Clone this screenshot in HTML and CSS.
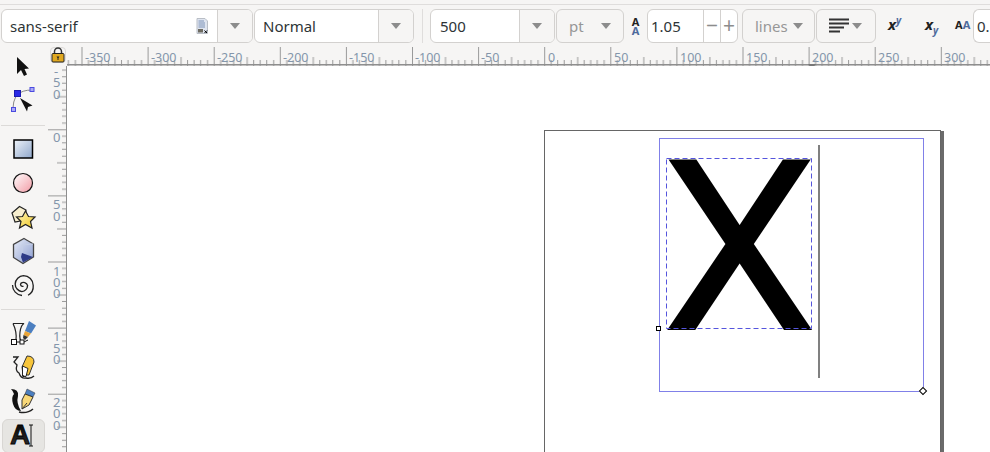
FILE: index.html
```html
<!DOCTYPE html>
<html lang="en">
<head>
<meta charset="utf-8">
<title>Inkscape text tool</title>
<link rel="stylesheet" href="styles.css">
</head>
<body>
<div class="app">
  <header class="toolbar">
    <div class="combo w-font">
      <span class="value">sans-serif</span>
      <svg class="doc-icon" viewBox="0 0 12 16" width="12" height="16">
        <path d="M1 0.500H9L11.500 3V15.500H1Z" fill="#dfe5f0" stroke="#b9bec6"/>
        <path d="M2.500 3H8M2.500 5H9M2.500 7H9M2.500 9H9" stroke="#7d93b8"/>
        <rect x="2" y="11" width="5" height="3.500" fill="#6d6a60"/>
        <path d="M8.500 12.500l2.500 2.500M11 12.500l-2.500 2.500" stroke="#000"/>
      </svg>
      <span class="drop"><i class="caret"></i></span>
    </div>
    <div class="combo w-style">
      <span class="value">Normal</span>
      <span class="drop"><i class="caret"></i></span>
    </div>
    <i class="vsep"></i>
    <div class="combo w-size">
      <span class="value v-size">500</span>
      <span class="drop d-size"><i class="caret"></i></span>
    </div>
    <div class="pick w-unit"><span>pt</span><i class="caret"></i></div>
    <div class="lh-icon"><b class="a-top">A</b><b class="a-bot">A</b></div>
    <div class="combo w-lh">
      <span class="value v-lh">1.05</span>
      <span class="step">&minus;</span>
      <span class="step">+</span>
    </div>
    <div class="pick w-lines"><span>lines</span><i class="caret"></i></div>
    <div class="pick w-align">
      <svg viewBox="0 0 21 17" width="21" height="17">
        <path d="M0 1.500H20M0 5.500H20M0 9.500H15M0 13.500H11" stroke="#333" stroke-width="2" fill="none"/>
      </svg>
      <i class="caret"></i>
    </div>
    <span class="mini sup">x<sup>y</sup></span>
    <span class="mini sub">x<sub>y</sub></span>
    <span class="mini aa">A<em>A</em></span>
    <div class="combo w-last"><span class="value v-last">0.5</span></div>
  </header>

  <div class="workspace">
    <nav class="tools">
      <div class="tool">
        <svg viewBox="0 0 28 28" width="28" height="28"><path d="M8 4V21L12 17L15 23L18 21.500L15.500 16L20 15.500Z" fill="#111"/></svg>
      </div>
      <div class="tool">
        <svg viewBox="0 0 28 28" width="28" height="28">
          <path d="M8 8Q13 3 23 3M7 9Q4 15 4 21" fill="none" stroke="#888"/>
          <rect x="5.500" y="3.500" width="6" height="6" fill="#2a2ae6" stroke="#1b1bb0"/>
          <rect x="21" y="0.500" width="4" height="4" fill="#aaaaf5" stroke="#4a4ae0"/>
          <rect x="2.500" y="20.500" width="4" height="4" fill="#aaaaf5" stroke="#4a4ae0"/>
          <path d="M11 11L23.500 18.500L19 20L18 24.500Z" fill="#111"/>
        </svg>
      </div>
      <hr class="tsep">
      <div class="tool">
        <svg viewBox="0 0 28 28" width="28" height="28">
          <defs><linearGradient id="gr" x1="0" y1="0" x2="1" y2="1"><stop offset="0" stop-color="#eef3f9"/><stop offset="1" stop-color="#8ea6ca"/></linearGradient></defs>
          <rect x="5" y="5" width="18.500" height="18" fill="url(#gr)" stroke="#000" stroke-width="1.500"/>
        </svg>
      </div>
      <div class="tool">
        <svg viewBox="0 0 28 28" width="28" height="28">
          <defs><linearGradient id="gc" x1="0" y1="0" x2="1" y2="1"><stop offset="0" stop-color="#fff"/><stop offset="1" stop-color="#f29aa4"/></linearGradient></defs>
          <circle cx="14" cy="14" r="9.500" fill="url(#gc)" stroke="#111" stroke-width="1.200"/>
        </svg>
      </div>
      <div class="tool">
        <svg viewBox="0 0 28 28" width="28" height="28">
          <defs><linearGradient id="gs" x1="0" y1="0" x2="1" y2="1"><stop offset="0" stop-color="#fff6c0"/><stop offset="1" stop-color="#f0c820"/></linearGradient></defs>
          <path d="M3 10L10.500 3.500L17 7L16 17L6 19Z" fill="#f7efcf" stroke="#222" stroke-width="1.200"/>
          <path d="M16.500 8L19.500 13.500L26 14L21.500 18.500L23 25L16.500 21.500L10.500 25L12 18.500L7.500 14L13.500 13.500Z" fill="url(#gs)" stroke="#222" stroke-width="1.200"/>
        </svg>
      </div>
      <div class="tool">
        <svg viewBox="0 0 28 28" width="28" height="28">
          <defs><linearGradient id="gb" x1="0" y1="0" x2="1" y2="1"><stop offset="0" stop-color="#e6ebf7"/><stop offset="1" stop-color="#8c9dcf"/></linearGradient></defs>
          <path d="M15 1.500L24.500 7V20L14 26.500L4.500 20.500V7.500Z" fill="url(#gb)" stroke="#444" stroke-width="1.300"/>
          <path d="M13 16L24 20L14 25.500L12 20Z" fill="#2e3a86"/>
          <path d="M13 16V8L24 7" fill="none" stroke="#c5cfe6"/>
        </svg>
      </div>
      <div class="tool">
        <svg viewBox="0 0 28 28" width="28" height="28">
          <path d="M14.500 15A1.800 1.800 0 0 1 12 12.500A4 4 0 0 1 18.500 14.500A6 6 0 0 1 13 20.500A7.500 7.500 0 0 1 6.500 13A8.500 8.500 0 0 1 14.500 5A9.500 9.500 0 0 1 24 14.500A10 10 0 0 1 19 24" fill="none" stroke="#222" stroke-width="1.300" transform="translate(-0.500 -0.500) scale(1.03)"/>
          <path d="M3.500 14A10.500 10.500 0 0 0 13 24.500" fill="none" stroke="#222" stroke-width="1.300"/>
        </svg>
      </div>
      <hr class="tsep tsep-b">
      <div class="tool">
        <svg viewBox="0 0 28 28" width="28" height="28">
          <path d="M4 3.500H15Q12 5 11 12Q10 20 13 22" fill="none" stroke="#222" stroke-width="1.200"/>
          <path d="M4 3.500Q8 12 7 20" fill="none" stroke="#222" stroke-width="1.200"/>
          <rect x="2.500" y="19.500" width="5" height="5" fill="#fff" stroke="#111"/>
          <rect x="11" y="20" width="4" height="4" fill="#fff" stroke="#111"/>
          <path d="M7 22H11M15 22L19 20" stroke="#111"/>
          <path d="M20 1L27 5.500L22 13.500L16 11Z" fill="#4c7fc0"/>
          <path d="M16 11L22 13.500L19 17L14.500 15Z" fill="#e9a53a"/>
          <path d="M14.500 15L19 17L16 20L14 18Z" fill="#333"/>
        </svg>
      </div>
      <div class="tool">
        <svg viewBox="0 0 28 28" width="28" height="28">
          <path d="M4 3H9L5 8L8 11Q6 17 10 19Q12 25 17 24Q22 25 25 22" fill="none" stroke="#222" stroke-width="1.300"/>
          <path d="M18 2Q25 2 25 8L20 21L14 21L13 13Z" fill="#f7c53a" stroke="#333"/>
          <path d="M13.500 12L19 14.500L17 22.500L13.500 22Z" fill="#fff" stroke="#222"/>
          <path d="M14 21L13.500 23L16 23Z" fill="#111"/>
        </svg>
      </div>
      <div class="tool">
        <svg viewBox="0 0 28 28" width="28" height="28">
          <path d="M2 1Q10 1 9 8Q7 15 12 23Q6 23 4 16Q2 9 5 6Q4 3 2 1Z" fill="#111"/>
          <path d="M10 24Q18 26 24 21" fill="none" stroke="#222" stroke-width="1.500"/>
          <path d="M18 1L26 5L24 9L16 6Z" fill="#4c7fc0" stroke="#333" stroke-width="0.500"/>
          <path d="M16 6L24 9L20 17L13 21L13 12Z" fill="#f8d878" stroke="#333"/>
          <path d="M13 21L18 15" stroke="#333"/>
        </svg>
      </div>
      <div class="tool tool-on">
        <svg viewBox="0 0 28 28" width="28" height="28">
          <defs><linearGradient id="ga" x1="0" y1="0" x2="0" y2="1"><stop offset="0" stop-color="#000"/><stop offset="1" stop-color="#333"/></linearGradient></defs>
          <text class="tool-a" x="1" y="22" fill="url(#ga)">A</text>
          <path d="M20 3H24M20 24H24M22 3V24" stroke="#111" fill="none"/>
        </svg>
      </div>
    </nav>

    <main class="main">
      <div class="lock">
        <svg viewBox="0 0 14 16" width="14" height="16">
          <path d="M3.500 7V4.500A3.500 3.500 0 0 1 10.500 4.500V7" fill="none" stroke="#333" stroke-width="1.500"/>
          <rect x="1" y="6.500" width="12" height="8.500" rx="1" fill="#e0a820" stroke="#222"/>
          <path d="M5.500 9.500H8.500L7.500 11V13H6.500V11Z" fill="#222"/>
        </svg>
      </div>
      <svg class="hruler" width="923" height="20">
        <defs>
          <pattern id="ph" patternUnits="userSpaceOnUse" width="66.100" height="20" x="14.500">
            <path d="M0.500 1V20M33.500 11V20" stroke="#999"/>
            <path d="M7 14V20M13.500 14V20M20 14V20M27 14V20M40 14V20M46.500 14V20M53 14V20M60 14V20" stroke="#999"/>
          </pattern>
        </defs>
        <rect width="923" height="20" fill="url(#ph)"/>
        <rect y="18" width="923" height="1.500" fill="#8e8e8e"/>
        <g class="rtext">
          <text x="18" y="16">-350</text><text x="84" y="16">-300</text><text x="150" y="16">-250</text>
          <text x="216" y="16">-200</text><text x="282" y="16">-150</text><text x="348" y="16">-100</text>
          <text x="414" y="16">-50</text><text x="481" y="16">0</text><text x="547" y="16">50</text>
          <text x="613" y="16">100</text><text x="679" y="16">150</text><text x="745" y="16">200</text>
          <text x="811" y="16">250</text><text x="877" y="16">300</text>
        </g>
        <path d="M741 18L749 18L745 23Z" fill="#777"/>
      </svg>
      <svg class="vruler" width="19" height="386">
        <defs>
          <pattern id="pv" patternUnits="userSpaceOnUse" width="19" height="66.100" y="-2.800">
            <path d="M0 0.500H19M9 33.500H19" stroke="#999"/>
            <path d="M14 7H19M14 13.500H19M14 20H19M14 27H19M14 40H19M14 46.500H19M14 53H19M14 60H19" stroke="#999"/>
          </pattern>
        </defs>
        <rect width="19" height="386" fill="url(#pv)"/>
        <rect x="18" width="1.500" height="386" fill="#8e8e8e"/>
        <g class="rtext vtext">
          <text x="6" y="10">-</text><text x="5" y="21">5</text><text x="5" y="33">0</text>
          <text x="5" y="76">0</text>
          <text x="5" y="143">5</text><text x="5" y="155">0</text>
          <text x="5" y="210">1</text><text x="5" y="221">0</text><text x="5" y="232">0</text>
          <text x="5" y="275">1</text><text x="5" y="287">5</text><text x="5" y="298">0</text>
          <text x="5" y="341">2</text><text x="5" y="352">0</text><text x="5" y="364">0</text>
        </g>
      </svg>
      <section class="canvas">
        <div class="page"></div>
        <div class="frame"></div>
        <span class="big-x">X</span>
        <svg class="bbox" width="146" height="172">
          <rect x="0.500" y="0.500" width="145" height="170" fill="none" stroke="#5555dd" stroke-dasharray="5 3"/>
        </svg>
        <div class="cursor"></div>
        <div class="h-square"></div>
        <div class="h-diamond"></div>
      </section>
    </main>
  </div>
</div>
</body>
</html>
```

FILE: styles.css
```css
* { box-sizing: border-box; }
html, body { margin: 0; padding: 0; }
body {
  width: 990px;
  height: 452px;
  overflow: hidden;
  background: #f6f5f4;
  font-family: "Noto Sans", "Open Sans", sans-serif;
  color: #2e3436;
}
.app { width: 990px; height: 452px; display: flex; flex-direction: column; overflow: hidden; }

/* top bar */
.toolbar {
  height: 42px;
  flex: none;
  margin-top: 4px;
  border-top: 1px solid #dfdddc;
  padding: 4px 0 0 1px;
  display: flex;
  align-items: flex-start;
  white-space: nowrap;
}
.combo, .pick {
  height: 34px;
  flex: none;
  border: 1px solid #d3d1cf;
  border-radius: 6px;
  display: flex;
  align-items: stretch;
  font-size: 15px;
}
.combo { background: #fff; }
.value { flex: 1; line-height: 32px; padding-left: 8px; color: #2e3436; }
.drop {
  width: 35px;
  flex: none;
  background: #f6f5f4;
  border-left: 1px solid #d3d1cf;
  border-radius: 0 5px 5px 0;
  display: flex;
  align-items: center;
  justify-content: center;
}
.caret {
  width: 0;
  height: 0;
  border-left: 5px solid transparent;
  border-right: 5px solid transparent;
  border-top: 6px solid #8c8c8c;
  display: block;
}
.w-font { width: 252px; position: relative; }
.doc-icon { align-self: center; margin-right: 9px; }
.w-style { width: 160px; margin-left: 1px; }
.vsep { width: 1px; height: 34px; background: #dfdddc; margin: 0 7px 0 8px; flex: none; }
.w-size { width: 125px; }
.v-size { padding-left: 9px; }
.d-size { width: 35px; }
.pick {
  color: #979797;
  background: #f6f5f4;
  align-items: center;
  justify-content: space-between;
  padding: 0 12px;
}
.w-unit { width: 68px; margin-left: 1px; }
.lh-icon {
  width: 23px;
  flex: none;
  height: 34px;
  display: flex;
  flex-direction: column;
  align-items: center;
  justify-content: center;
  font-size: 11px;
  line-height: 9px;
}
.a-top { color: #222; }
.a-bot { color: #4d6a9c; }
.w-lh { width: 91px; }
.v-lh { padding-left: 3px; }
.step {
  width: 17px;
  flex: none;
  border-left: 1px solid #d3d1cf;
  color: #8c8c8c;
  font-size: 21px;
  line-height: 30px;
  text-align: center;
}
.w-lines { width: 73px; margin-left: 4px; padding: 0 11px 0 12px; }
.w-align { width: 60px; margin-left: 1px; padding: 0 13px 0 12px; }
.mini {
  flex: none;
  height: 34px;
  font-weight: 700;
  font-style: italic;
  font-size: 15px;
  line-height: 31px;
  color: #222;
}
.mini sup, .mini sub { font-size: 10px; color: #4d6a9c; line-height: 0; }
.sup { margin-left: 12px; width: 37px; }
.sub { width: 30px; }
.aa { font-style: normal; font-size: 11px; width: 18px; }
.aa em { font-style: normal; color: #4d6a9c; }
.w-last { width: 30px; border-right: 0; border-radius: 6px 0 0 6px; }
.v-last { padding-left: 3px; }

/* body */
.workspace { flex: 1; min-height: 0; display: flex; }
.tools { width: 48px; flex: none; padding: 0 3px 0 1px; margin-top: 4px; }
.tool { width: 44px; height: 34px; display: flex; align-items: center; justify-content: center; }
.tool svg { margin-left: -1px; }
.tool-on {
  background: #e6e5e2;
  border: 1px solid #d8d6d3;
  border-radius: 6px;
  width: 43px;
  margin-left: 1px;
}
.tool-a {
  font-family: "Liberation Sans", sans-serif;
  font-weight: 700;
  font-size: 28px;
  stroke: #000;
  stroke-width: 0.8px;
}
.tsep { height: 1px; border: 0; margin: 7px 0 6px; background: #dcdad8; }
.tsep-b { margin: 7px 0; }

.main {
  flex: 1;
  min-width: 0;
  display: grid;
  grid-template-columns: 19px 1fr;
  grid-template-rows: 20px 1fr;
}
.lock {
  display: flex;
  align-items: center;
  justify-content: center;
  margin: 1px 1px 3px 2px;
  border: 1px solid #dcdad8;
  border-radius: 4px;
}
.hruler, .vruler { display: block; }
.rtext text { font-family: "Noto Sans", sans-serif; font-size: 12.5px; fill: #8496ab; }
.vtext text { font-size: 13px; }

.canvas { position: relative; background: #fff; overflow: hidden; }
.page {
  position: absolute;
  left: 477px;
  top: 64px;
  width: 397px;
  height: 420px;
  border: 1px solid #666;
  box-shadow: 3px 1px 0 #6b6b6b;
  background: #fff;
}
.frame {
  position: absolute;
  left: 592px;
  top: 72px;
  width: 265px;
  height: 254px;
  border: 1px solid #8080e8;
}
.big-x {
  position: absolute;
  left: 592.5px;
  top: 46px;
  font-family: Roboto, sans-serif;
  font-size: 239px;
  line-height: 272px;
  color: #000;
  transform: scaleX(1.06);
  transform-origin: left center;
}
.bbox {
  position: absolute;
  left: 599px;
  top: 92px;
  display: block;
}
.cursor {
  position: absolute;
  left: 751px;
  top: 79px;
  width: 2px;
  height: 233px;
  background: #808080;
}
.h-square {
  position: absolute;
  left: 589px;
  top: 260px;
  width: 5px;
  height: 5px;
  background: #fff;
  border: 1px solid #000;
}
.h-diamond {
  position: absolute;
  left: 853px;
  top: 322px;
  width: 6px;
  height: 6px;
  background: #fff;
  border: 1px solid #000;
  transform: rotate(45deg);
}
```
